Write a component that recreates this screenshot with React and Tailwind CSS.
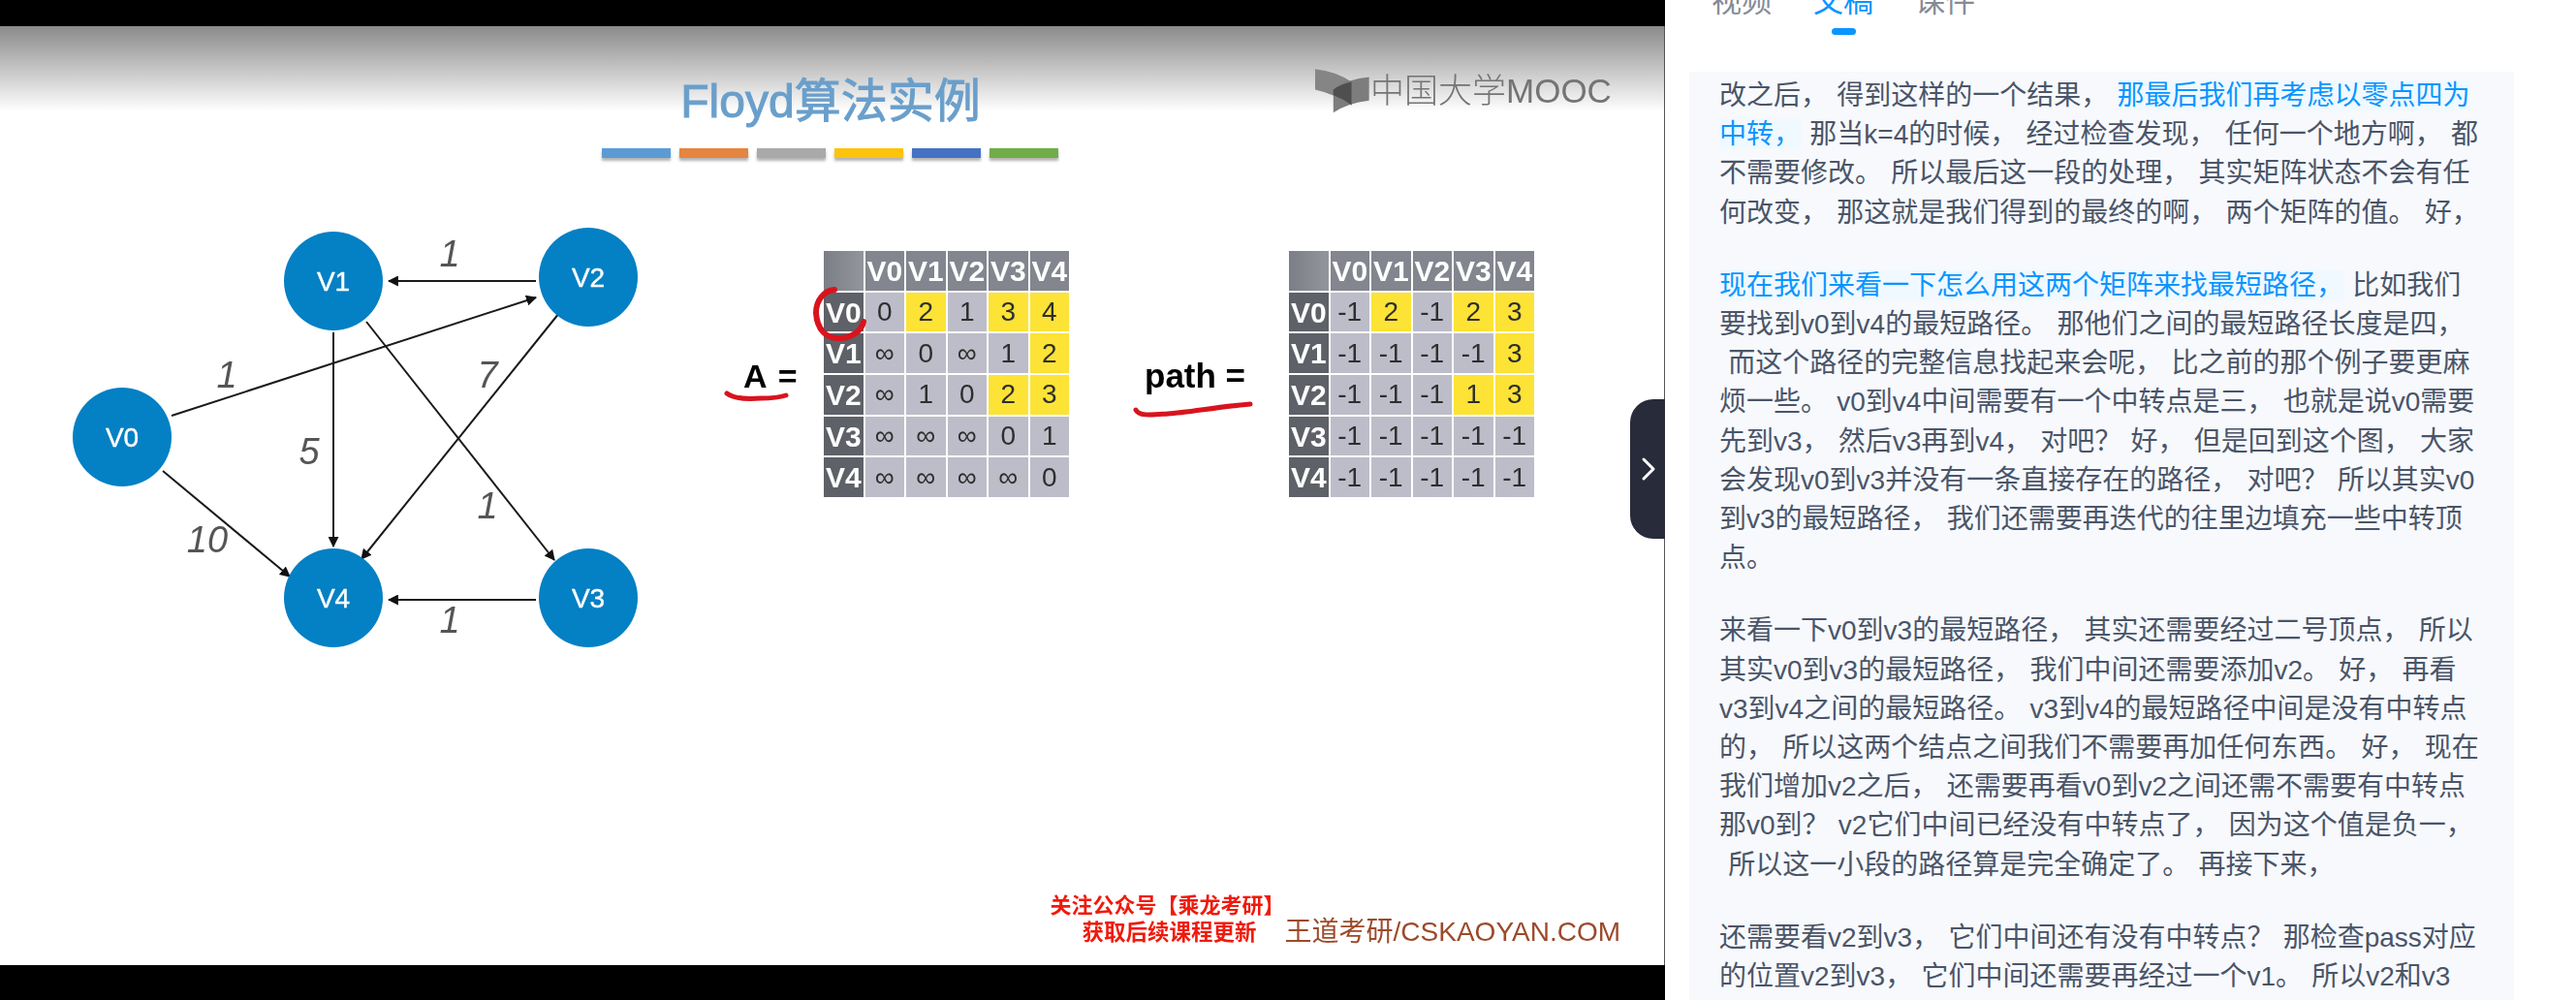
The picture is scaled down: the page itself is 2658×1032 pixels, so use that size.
import React from "react";

const stripes = ["bg-[#5b9bd5]", "bg-[#e5853f]", "bg-[#a9a9a9]", "bg-[#fcc40c]", "bg-[#4472c4]", "bg-[#70ad47]"];

const nodes = [
  ["V0", 126, 451],
  ["V1", 344, 290],
  ["V2", 607, 286],
  ["V3", 607, 617],
  ["V4", 344, 617],
];

const edges = [
  [553, 290, 401, 290],
  [177, 429, 553, 307],
  [344, 343, 344, 564],
  [378, 332, 572, 578],
  [577, 323, 373, 577],
  [168, 486, 299, 595],
  [553, 619, 401, 619],
];

const weights = [
  ["1", 464, 275],
  ["1", 234, 400],
  ["7", 503, 400],
  ["5", 319, 479],
  ["1", 503, 535],
  ["10", 214, 570],
  ["1", 464, 653],
];

const head = ["V0", "V1", "V2", "V3", "V4"];

// * marks a yellow cell
const matrixA = [
  ["0", "2*", "1", "3*", "4*"],
  ["∞", "0", "∞", "1", "2*"],
  ["∞", "1", "0", "2*", "3*"],
  ["∞", "∞", "∞", "0", "1"],
  ["∞", "∞", "∞", "∞", "0"],
];

const matrixPath = [
  ["-1", "2*", "-1", "2*", "3*"],
  ["-1", "-1", "-1", "-1", "3*"],
  ["-1", "-1", "-1", "1*", "3*"],
  ["-1", "-1", "-1", "-1", "-1"],
  ["-1", "-1", "-1", "-1", "-1"],
];

const paragraphs = [
  [
    ["改之后， 得到这样的一个结果， ", ["那最后我们再考虑以零点四为"]],
    [["中转，"], " 那当k=4的时候， 经过检查发现， 任何一个地方啊， 都"],
    ["不需要修改。 所以最后这一段的处理， 其实矩阵状态不会有任"],
    ["何改变， 那这就是我们得到的最终的啊， 两个矩阵的值。 好，"],
  ],
  [
    [["现在我们来看一下怎么用这两个矩阵来找最短路径，"], " 比如我们"],
    ["要找到v0到v4的最短路径。 那他们之间的最短路径长度是四，"],
    [" 而这个路径的完整信息找起来会呢， 比之前的那个例子要更麻"],
    ["烦一些。 v0到v4中间需要有一个中转点是三， 也就是说v0需要"],
    ["先到v3， 然后v3再到v4， 对吧？ 好， 但是回到这个图， 大家"],
    ["会发现v0到v3并没有一条直接存在的路径， 对吧？ 所以其实v0"],
    ["到v3的最短路径， 我们还需要再迭代的往里边填充一些中转顶"],
    ["点。"],
  ],
  [
    ["来看一下v0到v3的最短路径， 其实还需要经过二号顶点， 所以"],
    ["其实v0到v3的最短路径， 我们中间还需要添加v2。 好， 再看"],
    ["v3到v4之间的最短路径。 v3到v4的最短路径中间是没有中转点"],
    ["的， 所以这两个结点之间我们不需要再加任何东西。 好， 现在"],
    ["我们增加v2之后， 还需要再看v0到v2之间还需不需要有中转点"],
    ["那v0到？ v2它们中间已经没有中转点了， 因为这个值是负一，"],
    [" 所以这一小段的路径算是完全确定了。 再接下来，"],
  ],
  [
    ["还需要看v2到v3， 它们中间还有没有中转点？ 那检查pass对应"],
    ["的位置v2到v3， 它们中间还需要再经过一个v1。 所以v2和v3"],
  ],
];

function Graph() {
  return (
    <svg width="760" height="480" viewBox="0 220 760 480" className="shrink-0">
      <defs>
        <marker id="tip" viewBox="0 0 10 10" refX="9" refY="5" markerWidth="11" markerHeight="11" markerUnits="userSpaceOnUse" orient="auto">
          <path d="M0 0 L10 5 L0 10 Z" fill="#111" />
        </marker>
      </defs>
      {edges.map(([x1, y1, x2, y2], i) => (
        <line key={i} x1={x1} y1={y1} x2={x2} y2={y2} stroke="#1a1a1a" strokeWidth="2" markerEnd="url(#tip)" />
      ))}
      {nodes.map(([name, cx, cy]) => (
        <g key={name}>
          <circle cx={cx} cy={cy} r="51" fill="#0480c4" />
          <text x={cx} y={cy + 10} textAnchor="middle" fill="#fff" stroke="#fff" strokeWidth="0.4" fontSize="28" fontFamily="Liberation Sans, sans-serif">
            {name}
          </text>
        </g>
      ))}
      {weights.map(([w, x, y], i) => (
        <text key={i} x={x} y={y} textAnchor="middle" fill="#555" fontSize="38" fontStyle="italic" fontFamily="Liberation Sans, sans-serif">
          {w}
        </text>
      ))}
    </svg>
  );
}

function Matrix({ rows }) {
  return (
    <div className="grid grid-cols-6 grid-rows-6 w-[253px] h-[254px] gap-[2px] shrink-0 text-[28px] text-[#2e2e2e]">
      <div className="bg-gradient-to-r from-[#7b7e86] to-[#94969d]" />
      {head.map((h) => (
        <div key={h} className="flex items-center justify-center bg-[#83858f] text-[30px] text-white font-bold">
          {h}
        </div>
      ))}
      {rows.map((row, r) => (
        <React.Fragment key={r}>
          <div className="flex items-center justify-center bg-[#5f6168] text-[30px] text-white font-bold">V{r}</div>
          {row.map((cell, c) => {
            const yellow = cell.endsWith("*");
            return (
              <div key={c} className={yellow ? "flex items-center justify-center bg-[#fce336]" : "flex items-center justify-center bg-[#bdbdc9]"}>
                {cell.replace("*", "")}
              </div>
            );
          })}
        </React.Fragment>
      ))}
    </div>
  );
}

function Logo() {
  return (
    <div className="absolute left-[1357px] top-[44px] flex items-center gap-[1px]">
      <svg width="56" height="46" viewBox="52 33 164 133">
        <path d="M52 33 Q115 40 162 72 L162 142 Q110 108 52 95 Z" fill="#858585" />
        <path d="M107 165 L107 95 Q150 62 215 57 L215 128 Q150 135 107 165 Z" fill="#7d7d7d" />
        <path d="M107 95 Q130 78 162 72 L162 142 Q135 122 107 112 Z" fill="#4f4f4f" />
      </svg>
      <span className="text-[35px] leading-[40px] font-light text-[#747474]">中国大学MOOC</span>
    </div>
  );
}

function Slide() {
  return (
    <div className="flex-1 min-h-0 border-r border-[#555] flex">
      <div className="relative flex-1 flex flex-col items-center blur-[0.6px] bg-[linear-gradient(#8a8a8a,#ffffff_88px)]">
        <h1 className="mt-[48px] -ml-[3px] text-[48px] leading-[60px] text-[#6a9fcb] [-webkit-text-stroke:1px_#6a9fcb]">Floyd算法实例</h1>
        <div className="mt-[18px] -ml-[4px] flex gap-[9px]">
          {stripes.map((c) => (
            <div key={c} className={`w-[71px] h-[10px] ${c} shadow-[0_3px_3px_rgba(0,0,0,0.3)]`} />
          ))}
        </div>
        <div className="mt-[57px] flex w-full items-start">
          <Graph />
          <div className="mt-[39px] flex items-center">
            <div className="w-[90px] mt-[3px] pl-[7px] text-[34px] leading-[40px] font-bold text-black [word-spacing:3px]">A =</div>
            <Matrix rows={matrixA} />
            <div className="w-[227px] mt-[3px] pl-[78px] text-[35px] leading-[40px] font-bold text-black">path =</div>
            <Matrix rows={matrixPath} />
          </div>
        </div>
        <div className="mt-auto mb-[19px] flex w-full justify-end items-end pr-[45px]">
          <div className="w-[242px] font-bold text-[#f01a0c] text-[22px] leading-[28px]">
            <div>关注公众号【乘龙考研】</div>
            <div className="pl-[33px] text-[22.5px]">获取后续课程更新</div>
          </div>
          <div className="text-[28px] leading-[30px] text-[#9c4a2a]">王道考研/CSKAOYAN.COM</div>
        </div>
        <Logo />
        <svg className="absolute inset-0 pointer-events-none" width="1717" height="969" viewBox="0 27 1717 969" fill="none" stroke="#d8141e" strokeLinecap="round">
          <path d="M861 299 C850 300 842 310 842 323 C843 340 853 350 866 349 C878 349 889 342 891 332" strokeWidth="6" />
          <path d="M750 406 C758 412 772 412 785 411 C795 411 805 410 811 408" strokeWidth="5" />
          <path d="M1172 423 C1175 430 1190 428 1205 427 C1225 426 1255 420 1290 417" strokeWidth="5" />
        </svg>
      </div>
    </div>
  );
}

function Transcript() {
  return (
    <div className="ml-[25px] w-[851px] flex-1 overflow-hidden bg-[#f7f9fd] pl-[31px] pt-[5px] text-[28px] leading-[40.2px] text-[#4a5568] [word-spacing:1.5px]">
      {paragraphs.map((lines, p) => (
        <div key={p} className="mb-[35px]">
          {lines.map((line, l) => (
            <div key={l} className="whitespace-pre">
              {line.map((part, i) =>
                Array.isArray(part) ? (
                  <span key={i} className="bg-[#f0f9ff] text-[#0a95ff]">
                    {part[0]}
                  </span>
                ) : (
                  <span key={i}>{part}</span>
                )
              )}
            </div>
          ))}
        </div>
      ))}
    </div>
  );
}

export default function App() {
  return (
    <div
      className="relative flex w-[2658px] h-[1032px] overflow-hidden bg-white"
      style={{ fontFamily: '"Liberation Sans", "Noto Sans CJK SC", sans-serif' }}
    >
      <div className="flex w-[1718px] shrink-0 flex-col">
        <div className="h-[27px] bg-black" />
        <Slide />
        <div className="h-[36px] bg-black" />
      </div>

      <div className="flex-1 flex flex-col min-w-0">
        <div className="flex h-[74px] shrink-0 gap-[43px] pl-[48px] text-[31px] leading-[32px] text-[#858b96]">
          <div className="-mt-[14px]">视频</div>
          <div className="-mt-[14px] flex flex-col items-center text-[#0a95ff]">
            文稿
            <div className="mt-[11px] h-[7px] w-[25px] rounded-full bg-[#0a95ff]" />
          </div>
          <div className="-mt-[14px]">课件</div>
        </div>
        <Transcript />
      </div>

      <div className="absolute left-[1682px] top-[412px] flex h-[144px] w-[36px] items-center justify-center rounded-l-[24px] bg-[#272b3a] pl-[2px]">
        <svg width="16" height="26" viewBox="0 0 16 26" fill="none" stroke="#fff" strokeWidth="3" strokeLinecap="round" strokeLinejoin="round">
          <path d="M3 3 L13 13 L3 23" />
        </svg>
      </div>
    </div>
  );
}
